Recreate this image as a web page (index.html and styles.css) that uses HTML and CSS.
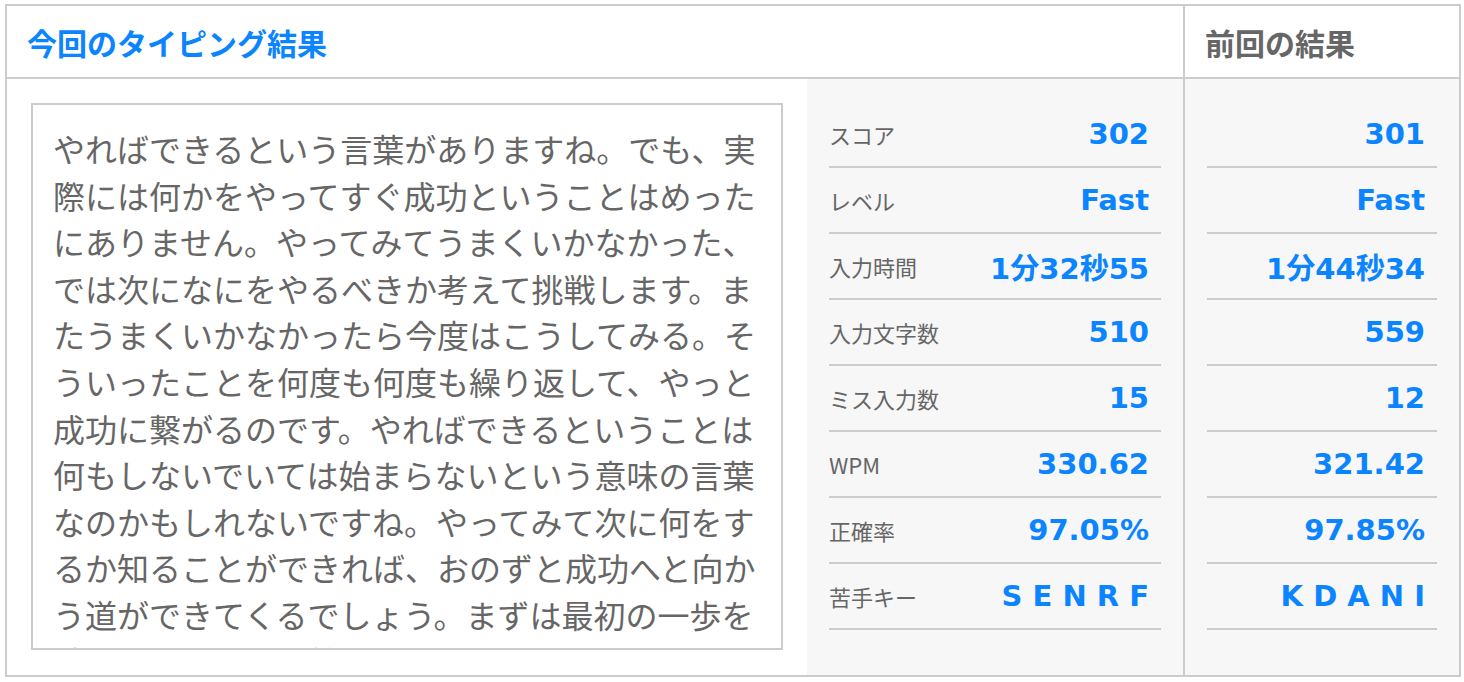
FILE: index.html
```html
<!DOCTYPE html>
<html lang="ja">
<head>
<meta charset="utf-8">
<title>タイピング結果</title>
<link rel="stylesheet" href="styles.css">
</head>
<body>
<div class="result">
  <section class="current">
    <h2 class="title title-current">今回のタイピング結果</h2>
    <div class="current-body">
      <div class="text-area">
        <div class="text-box">
          <p>やればできるという言葉がありますね。でも、実際には何かをやってすぐ成功ということはめったにありません。やってみてうまくいかなかった、では次になにをやるべきか考えて挑戦します。またうまくいかなかったら今度はこうしてみる。そういったことを何度も何度も繰り返して、やっと成功に繋がるのです。やればできるということは何もしないでいては始まらないという意味の言葉なのかもしれないですね。やってみて次に何をするか知ることができれば、おのずと成功へと向かう道ができてくるでしょう。まずは最初の一歩を踏み出すことから始めてみましょう。</p>
        </div>
      </div>
      <ul class="stats">
        <li class="row"><span class="label">スコア</span><span class="value">302</span></li>
        <li class="row"><span class="label">レベル</span><span class="value">Fast</span></li>
        <li class="row"><span class="label">入力時間</span><span class="value">1分32秒55</span></li>
        <li class="row"><span class="label">入力文字数</span><span class="value">510</span></li>
        <li class="row"><span class="label">ミス入力数</span><span class="value">15</span></li>
        <li class="row"><span class="label">WPM</span><span class="value">330.62</span></li>
        <li class="row"><span class="label">正確率</span><span class="value">97.05%</span></li>
        <li class="row"><span class="label">苦手キー</span><span class="value">S E N R F</span></li>
      </ul>
    </div>
  </section>
  <section class="previous">
    <h2 class="title title-prev">前回の結果</h2>
    <ul class="stats stats-prev">
      <li class="row"><span class="value">301</span></li>
      <li class="row"><span class="value">Fast</span></li>
      <li class="row"><span class="value">1分44秒34</span></li>
      <li class="row"><span class="value">559</span></li>
      <li class="row"><span class="value">12</span></li>
      <li class="row"><span class="value">321.42</span></li>
      <li class="row"><span class="value">97.85%</span></li>
      <li class="row"><span class="value">K D A N I</span></li>
    </ul>
  </section>
</div>
</body>
</html>
```

FILE: styles.css
```css
* {
  box-sizing: border-box;
}

body {
  margin: 0;
  padding: 4px 3px 0 5px;
  background: #ffffff;
  font-family: "Noto Sans CJK JP", sans-serif;
  color: #666666;
}

.result {
  display: grid;
  grid-template-columns: 1176px 276px;
  width: 1456px;
  border: 2px solid #cccccc;
}

.title {
  margin: 0;
  height: 73px;
  padding-left: 20px;
  display: flex;
  align-items: center;
  border-bottom: 2px solid #cccccc;
  background: #ffffff;
  font-family: "Noto Sans CJK JP", sans-serif;
  font-weight: 700;
  font-size: 30px;
  line-height: 1;
}

.title-current {
  color: #0a84ff;
}

.title-prev {
  color: #666666;
}

.current-body {
  display: flex;
  height: 596px;
}

.text-area {
  width: 800px;
  padding: 24px 24px 25px;
  background: #ffffff;
}

.text-box {
  height: 547px;
  border: 2px solid #cccccc;
  padding: 20px 20px 0;
  overflow: hidden;
}

.text-box p {
  margin: 0;
  font-size: 32px;
  line-height: 46.6px;
  color: #666666;
}

.stats {
  list-style: none;
  margin: 0;
  padding: 23px 22px 0;
  width: 376px;
  background: #f7f7f7;
}

.previous {
  border-left: 2px solid #cccccc;
  background: #f7f7f7;
}

.stats-prev {
  width: 274px;
  height: 596px;
}

.row {
  display: flex;
  justify-content: space-between;
  align-items: center;
  height: 66px;
  padding: 0 12px 0 0;
  border-bottom: 2px solid #cccccc;
}

.stats-prev .row {
  justify-content: flex-end;
}

.label {
  font-size: 22px;
  color: #666666;
}

.value {
  font-family: "DejaVu Sans", "Noto Sans CJK JP", sans-serif;
  font-weight: 700;
  font-size: 29px;
  color: #0a84ff;
}
```
